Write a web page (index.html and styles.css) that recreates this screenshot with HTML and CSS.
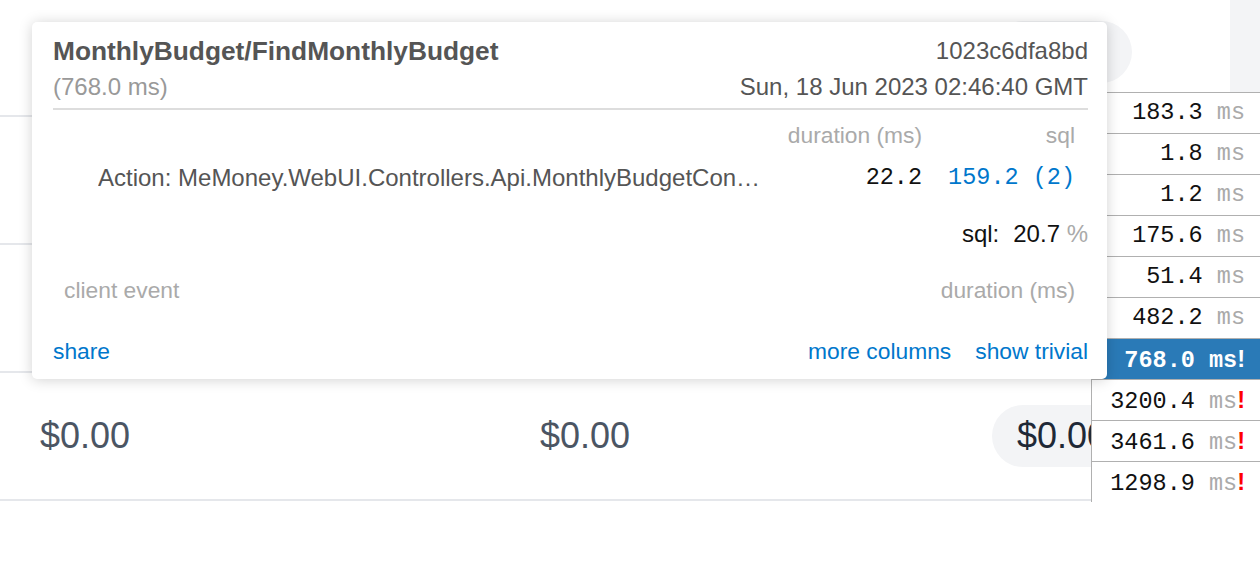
FILE: index.html
```html
<!DOCTYPE html>
<html lang="en">
<head>
<meta charset="utf-8">
<title>MiniProfiler</title>
<link rel="stylesheet" href="styles.css">
</head>
<body>
<main class="page">
  <div class="budget">
    <div class="brow">
      <div class="cell">$0.00</div>
      <div class="cell">$0.00</div>
      <div class="cell"><span class="pill">$0.00</span></div>
    </div>
    <div class="brow">
      <div class="cell">$0.00</div>
      <div class="cell">$0.00</div>
      <div class="cell"><span class="pill">$0.00</span></div>
    </div>
    <div class="brow">
      <div class="cell">$0.00</div>
      <div class="cell">$0.00</div>
      <div class="cell"><span class="pill">$0.00</span></div>
    </div>
    <div class="brow">
      <div class="cell">$0.00</div>
      <div class="cell">$0.00</div>
      <div class="cell"><span class="pill">$0.00</span></div>
    </div>
  </div>
</main>

<div class="side-strip"></div>

<div class="mp-results">
  <div class="mp-button"><span class="mp-num">183.3</span> <span class="mp-unit">ms</span></div>
  <div class="mp-button"><span class="mp-num">1.8</span> <span class="mp-unit">ms</span></div>
  <div class="mp-button"><span class="mp-num">1.2</span> <span class="mp-unit">ms</span></div>
  <div class="mp-button"><span class="mp-num">175.6</span> <span class="mp-unit">ms</span></div>
  <div class="mp-button"><span class="mp-num">51.4</span> <span class="mp-unit">ms</span></div>
  <div class="mp-button"><span class="mp-num">482.2</span> <span class="mp-unit">ms</span></div>
  <div class="mp-button active"><span class="mp-num">768.0</span> <span class="mp-unit">ms</span><span class="mp-warn">!</span></div>
  <div class="mp-button"><span class="mp-num">3200.4</span> <span class="mp-unit">ms</span><span class="mp-warn">!</span></div>
  <div class="mp-button"><span class="mp-num">3461.6</span> <span class="mp-unit">ms</span><span class="mp-warn">!</span></div>
  <div class="mp-button"><span class="mp-num">1298.9</span> <span class="mp-unit">ms</span><span class="mp-warn">!</span></div>
</div>

<section class="mp-popup">
  <header class="mp-head">
    <div class="mp-name">MonthlyBudget/FindMonthlyBudget</div>
    <div class="mp-id">1023c6dfa8bd</div>
    <div class="mp-overall">(768.0 ms)</div>
    <div class="mp-date">Sun, 18 Jun 2023 02:46:40 GMT</div>
  </header>

  <div class="mp-timings">
    <div class="th"></div>
    <div class="th">duration (ms)</div>
    <div class="th">sql</div>
    <div class="td label"><span class="label-text">Action: MeMoney.WebUI.Controllers.Api.MonthlyBudgetController.FindMonthlyBudget</span></div>
    <div class="td mono">22.2</div>
    <div class="td mono link">159.2 (2)</div>
  </div>

  <div class="mp-sql-pct">sql:<span class="pct-val">20.7</span> <span class="pct-unit">%</span></div>

  <div class="mp-client">
    <span>client event</span>
    <span>duration (ms)</span>
  </div>

  <footer class="mp-links">
    <a class="lnk">share</a>
    <div class="mp-links-right">
      <a class="lnk">more columns</a>
      <a class="lnk">show trivial</a>
    </div>
  </footer>
</section>
</body>
</html>
```

FILE: styles.css
```css
html, body {
  margin: 0;
  padding: 0;
  background: #ffffff;
}

body {
  font-family: "Liberation Sans", Arial, sans-serif;
  overflow: hidden;
  width: 1260px;
  height: 568px;
  position: relative;
}

/* ---------- background page ---------- */
.budget {
  margin-top: -11px;
}

.brow {
  display: grid;
  grid-template-columns: 500px 452px 1fr;
  align-items: center;
  height: 126px;
  padding-left: 40px;
  border-bottom: 2px solid #e5e7eb;
}

.cell {
  font-size: 36px;
  line-height: 1;
  color: #4b5563;
  white-space: nowrap;
}

.pill {
  display: inline-block;
  height: 62px;
  line-height: 62px;
  padding: 0 25px;
  border-radius: 31px;
  background: #f3f4f6;
  color: #1f2937;
}

.side-strip {
  position: absolute;
  top: 0;
  right: 0;
  width: 30px;
  height: 92px;
  background: #f3f4f6;
}

/* ---------- profiler results list ---------- */
.mp-results {
  position: absolute;
  top: 92px;
  left: 1091px;
  right: 0;
  background: #fff;
  border-left: 1px solid #b0b0b0;
  z-index: 1;
}

.mp-button {
  height: 40px;
  line-height: 40px;
  border-top: 1px solid #b0b0b0;
  padding-right: 15px;
  text-align: right;
  font-family: "Liberation Mono", "Courier New", monospace;
  font-size: 23.5px;
  color: #111;
  white-space: nowrap;
}

.mp-unit {
  color: #aaa;
}

.mp-warn {
  font-family: "Liberation Sans", Arial, sans-serif;
  font-weight: bold;
  color: #f00;
}

.mp-button.active {
  background: #2a7ab7;
  color: #fff;
  font-weight: bold;
}

.mp-button.active .mp-unit,
.mp-button.active .mp-warn {
  color: #fff;
}

/* ---------- popup ---------- */
.mp-popup {
  position: absolute;
  top: 22px;
  left: 32px;
  width: 1075px;
  box-sizing: border-box;
  padding: 11px 19px 10px 21px;
  background: #fff;
  border-radius: 5px;
  box-shadow: 0 1px 14px rgba(0, 0, 0, 0.18);
  color: #555;
  font-size: 24px;
  z-index: 2;
}

.mp-head {
  display: grid;
  grid-template-columns: 1fr auto;
  line-height: 36px;
  padding-bottom: 3px;
  border-bottom: 2px solid #ddd;
}

.mp-name {
  font-size: 26.3px;
  font-weight: bold;
  color: #555;
}

.mp-id,
.mp-date {
  text-align: right;
}

.mp-overall {
  color: #999;
}

.mp-timings {
  margin-top: 4px;
  display: grid;
  grid-template-columns: 1fr auto auto;
}

.th {
  height: 42px;
  line-height: 42px;
  padding: 0 13px;
  font-size: 22.8px;
  color: #aaa;
  text-align: right;
}

.td {
  line-height: 44px;
  padding: 0 13px;
  text-align: right;
  white-space: nowrap;
}

.td.label {
  text-align: left;
  padding-left: 45px;
  padding-right: 0;
}

.label-text {
  display: block;
  width: 668px;
  overflow: hidden;
  white-space: nowrap;
  text-overflow: ellipsis;
  color: #555;
}

.mono {
  font-family: "Liberation Mono", "Courier New", monospace;
  font-size: 23.5px;
  color: #111;
}

.mono.link {
  color: #0077cc;
}

.mp-sql-pct {
  margin-top: 16px;
  line-height: 36px;
  text-align: right;
  color: #111;
}

.pct-val {
  margin-left: 14px;
}

.pct-unit {
  color: #aaa;
}

.mp-client {
  margin-top: 20px;
  display: flex;
  justify-content: space-between;
  line-height: 36px;
  padding: 0 13px 0 11px;
  font-size: 22.8px;
  color: #aaa;
}

.mp-links {
  margin-top: 25px;
  display: flex;
  justify-content: space-between;
  line-height: 36px;
  font-size: 22.8px;
}

.mp-links-right {
  display: flex;
  gap: 24px;
}

.lnk {
  color: #0077cc;
  cursor: pointer;
}
```
